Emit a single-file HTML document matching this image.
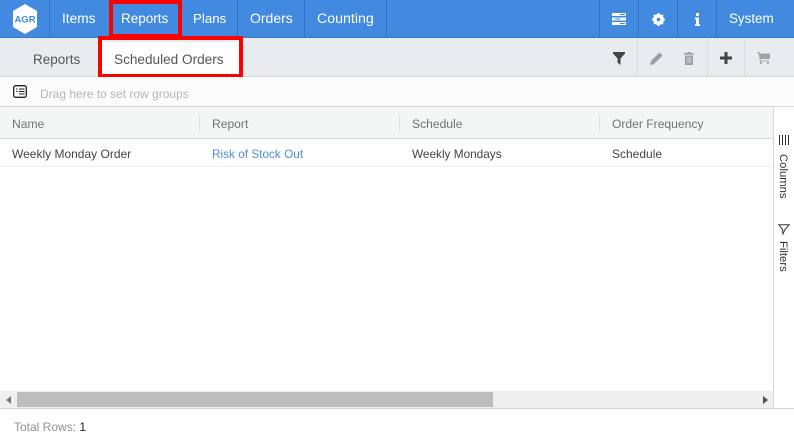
<!DOCTYPE html>
<html><head><meta charset="utf-8"><style>
html,body{margin:0;padding:0;width:794px;height:438px;overflow:hidden;background:#fff;font-family:"Liberation Sans",sans-serif;}
.a{position:absolute;white-space:nowrap;}
.t{position:absolute;white-space:nowrap;line-height:16px;}
.nav{color:#fff;font-size:14px;top:11px;}
.d{position:absolute;top:0;width:1px;height:37px;background:#2f74c8;}
.s{position:absolute;top:38px;width:1px;height:38px;background:#d8dbde;}
.h{color:#6f7173;font-size:12.1px;top:116px;}
.c{color:#444;font-size:12px;top:146px;}
.r{position:absolute;border:4px solid #f00;box-sizing:border-box;}
svg{position:absolute;}
</style></head><body>
<div class="a" style="left:0;top:0;width:794px;height:37px;background:#428ae0"></div>
<div class="a" style="left:0;top:37px;width:794px;height:1px;background:#3a7acb"></div>
<div class="d" style="left:49px"></div><div class="d" style="left:109px"></div><div class="d" style="left:180px"></div><div class="d" style="left:237px"></div><div class="d" style="left:304px"></div><div class="d" style="left:386px"></div>
<div class="d" style="left:599px"></div><div class="d" style="left:638px"></div><div class="d" style="left:677px"></div><div class="d" style="left:716px"></div>
<svg style="left:12px;top:4px" width="26" height="30" viewBox="0 0 26 30"><polygon points="13,0 25,7 25,23 13,30 1,23 1,7" fill="#fff"/><text x="13" y="18.500" text-anchor="middle" font-family="Liberation Sans" font-weight="700" font-size="9.500" fill="#428ae0">AGR</text></svg>
<span class="t nav" style="left:62px;font-size:13.700px">Items</span>
<span class="t nav" style="left:121px;font-size:13.500px">Reports</span>
<span class="t nav" style="left:193px;font-size:13.300px">Plans</span>
<span class="t nav" style="left:250px;top:10px">Orders</span>
<span class="t nav" style="left:317px;font-size:14.200px">Counting</span>
<span class="t nav" style="left:729px;font-size:13.400px">System</span>
<svg style="left:611px;top:13px" width="16" height="12" viewBox="0 0 16 12"><path d="M1 0h14v3H1zM1 4.500h14v3H1zM1 9h14v3H1z" fill="#fff"/><path d="M9 1.500h5M4 6h5M9 10.500h5" stroke="#428ae0" stroke-width="1"/></svg>
<svg style="left:652px;top:13px" width="13" height="13" viewBox="0 0 13 13"><circle cx="6.500" cy="6.500" r="4" fill="none" stroke="#fff" stroke-width="3"/><path d="M6.500 0v13M0 6.500h13M2 2l9 9M11 2l-9 9" stroke="#fff" stroke-width="1.800"/><circle cx="6.500" cy="6.500" r="1.800" fill="#428ae0"/></svg>
<svg style="left:694px;top:13px" width="7" height="13" viewBox="0 0 7 13"><path d="M2 0h3v3H2zM1 4.500h4V11h1v2H1v-2h1V6.500H1z" fill="#fff"/></svg>

<div class="a" style="left:0;top:38px;width:794px;height:38px;background:#e9ecef"></div>
<div class="a" style="left:0;top:76px;width:794px;height:1px;background:#d3d6da"></div>
<div class="a" style="left:100px;top:42px;width:141px;height:34px;background:#fff"></div>
<span class="t" style="left:33px;top:52px;font-size:13.500px;color:#555">Reports</span>
<span class="t" style="left:114px;top:52px;font-size:13.600px;color:#555">Scheduled Orders</span>
<div class="s" style="left:637px"></div><div class="s" style="left:707px"></div><div class="s" style="left:744px"></div>
<svg style="left:613px;top:52px" width="12" height="13" viewBox="0 0 12 13"><path d="M0 0h12v1.500L7.500 6.500V13L4.500 10.500V6.500L0 1.500z" fill="#444"/></svg>
<svg style="left:650px;top:52px" width="13" height="13" viewBox="0 0 13 13"><path d="M0 13l1-4L9.500.5l3 3L4 12z" fill="#9a9c9f"/></svg>
<svg style="left:684px;top:52px" width="10" height="13" viewBox="0 0 10 13"><path d="M3.500 0h3v1H10v1.500H0V1h3.500zM1 3.500h8V13H1zM2.500 5v6.500h5V5z" fill="#9a9c9f"/><path d="M2.500 5h5v6.500h-5z" fill="#b4bcc4"/></svg>
<svg style="left:720px;top:52px" width="12" height="12" viewBox="0 0 12 12"><path d="M4.500 0h3v4.500H12v3H7.500V12h-3V7.500H0v-3h4.500z" fill="#444"/></svg>
<svg style="left:757px;top:52px" width="13" height="12" viewBox="0 0 13 12"><path d="M0 0h2.500l.5 1.500h10V7H3.500L4 8.500h8V9.500H3L1.500 1H0z" fill="#a2a4a6"/><circle cx="4" cy="11" r="1.100" fill="#a2a4a6"/><circle cx="11" cy="11" r="1.100" fill="#a2a4a6"/></svg>
<div class="r" style="left:109px;top:0;width:73px;height:38px"></div>
<div class="r" style="left:98px;top:36px;width:145px;height:42px"></div>

<div class="a" style="left:0;top:77px;width:794px;height:29px;background:#fcfcfc"></div>
<div class="a" style="left:0;top:106px;width:794px;height:1px;background:#d5d8dc"></div>
<svg style="left:13px;top:85px" width="14" height="13" viewBox="0 0 14 13"><rect x=".7" y=".7" width="12.600" height="11.600" rx="2" fill="#fff" stroke="#222" stroke-width="1.300"/><path d="M3 4h1.500M6 4h5.500M3 6.500h1.500M6 6.500h5.500M6 9h5.500" stroke="#222"/></svg>
<span class="t" style="left:40px;top:86px;font-size:12px;color:#b4b4bb">Drag here to set row groups</span>

<div class="a" style="left:0;top:107px;width:773px;height:31px;background:#f4f6f6"></div>
<div class="a" style="left:0;top:138px;width:773px;height:1px;background:#d5d8dc"></div>
<div class="a" style="left:199px;top:115px;width:1px;height:16px;background:#dfe1e3"></div>
<div class="a" style="left:399px;top:115px;width:1px;height:16px;background:#dfe1e3"></div>
<div class="a" style="left:599px;top:115px;width:1px;height:16px;background:#dfe1e3"></div>
<span class="t h" style="left:12px">Name</span>
<span class="t h" style="left:212px">Report</span>
<span class="t h" style="left:412px">Schedule</span>
<span class="t h" style="left:612px">Order Frequency</span>
<span class="t c" style="left:12px">Weekly Monday Order</span>
<span class="t c" style="left:212px;color:#4a8fe0;font-size:11.800px">Risk of Stock Out</span>
<span class="t c" style="left:412px;font-size:11.800px">Weekly Mondays</span>
<span class="t c" style="left:612px">Schedule</span>
<div class="a" style="left:0;top:166px;width:773px;height:1px;background:#eceeef"></div>

<div class="a" style="left:773px;top:107px;width:1px;height:301px;background:#d5d8dc"></div>
<svg style="left:778px;top:135px" width="12" height="10" viewBox="0 0 12 10"><path d="M1.500 0v10M4.500 0v10M7.500 0v10M10.500 0v10" stroke="#333"/></svg>
<span class="t" style="left:776px;top:154px;font-size:11.300px;color:#333;writing-mode:vertical-lr;line-height:14px">Columns</span>
<svg style="left:778px;top:224px" width="12" height="11" viewBox="0 0 12 11"><path d="M.8.700h10.400L7 5.500l-2 4.500-.5-4.500z" fill="#fff" stroke="#333"/></svg>
<span class="t" style="left:776px;top:241px;font-size:11.300px;color:#333;writing-mode:vertical-lr;line-height:14px">Filters</span>

<div class="a" style="left:0;top:391px;width:773px;height:17px;background:#efefef"></div>
<div class="a" style="left:17px;top:392px;width:476px;height:15px;background:#bdbdbd"></div>
<svg style="left:6px;top:396px" width="5" height="8" viewBox="0 0 5 8"><path d="M5 0v8L0 4z" fill="#777"/></svg>
<svg style="left:763px;top:396px" width="5" height="8" viewBox="0 0 5 8"><path d="M0 0v8l5-4z" fill="#505050"/></svg>
<div class="a" style="left:0;top:408px;width:794px;height:1px;background:#d5d5d5"></div>
<span class="t" style="left:14px;top:419px;font-size:12px;color:#8d8f91">Total Rows: <span style="color:#222">1</span></span>
</body></html>
